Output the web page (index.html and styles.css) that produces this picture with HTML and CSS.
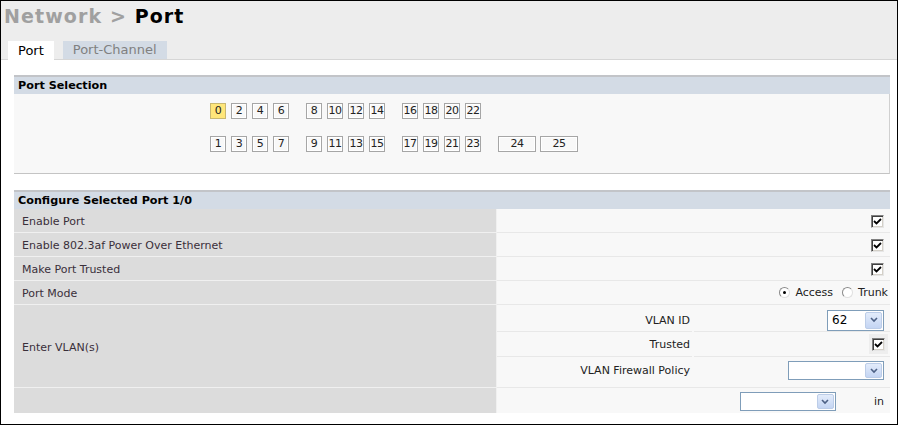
FILE: index.html
```html
<!DOCTYPE html>
<html>
<head>
  <title>Network &gt; Port</title>
  <link rel="stylesheet" href="styles.css">
</head>
<body>
  <div class="frame">
    <div class="header">
      <h1 class="title"><span class="crumb">Network &gt;</span> Port</h1>
      <div class="tabs">
        <div class="tab active">Port</div>
        <div class="tab">Port-Channel</div>
      </div>
    </div>

    <div class="section">
      <div class="section-head">Port Selection</div>
      <div class="port-box">
        <div class="port-row">
          <div class="group">
            <span class="port selected">0</span><span class="port">2</span><span class="port">4</span><span class="port">6</span>
          </div>
          <div class="group">
            <span class="port">8</span><span class="port">10</span><span class="port">12</span><span class="port">14</span>
          </div>
          <div class="group">
            <span class="port">16</span><span class="port">18</span><span class="port">20</span><span class="port">22</span>
          </div>
        </div>
        <div class="port-row">
          <div class="group">
            <span class="port">1</span><span class="port">3</span><span class="port">5</span><span class="port">7</span>
          </div>
          <div class="group">
            <span class="port">9</span><span class="port">11</span><span class="port">13</span><span class="port">15</span>
          </div>
          <div class="group">
            <span class="port">17</span><span class="port">19</span><span class="port">21</span><span class="port">23</span>
          </div>
          <div class="group wide">
            <span class="port big">24</span><span class="port big">25</span>
          </div>
        </div>
      </div>
    </div>

    <div class="section config">
      <div class="section-head">Configure Selected Port 1/0</div>
      <table class="config-table">
        <tr>
          <td class="label">Enable Port</td>
          <td class="value"><span class="check"><svg viewBox="0 0 9 9" width="9" height="9"><path d="M1 4 L3.5 6.5 L8 2" fill="none" stroke="#000" stroke-width="1.8"/></svg></span></td>
        </tr>
        <tr>
          <td class="label">Enable 802.3af Power Over Ethernet</td>
          <td class="value"><span class="check"><svg viewBox="0 0 9 9" width="9" height="9"><path d="M1 4 L3.5 6.5 L8 2" fill="none" stroke="#000" stroke-width="1.8"/></svg></span></td>
        </tr>
        <tr>
          <td class="label">Make Port Trusted</td>
          <td class="value"><span class="check"><svg viewBox="0 0 9 9" width="9" height="9"><path d="M1 4 L3.5 6.5 L8 2" fill="none" stroke="#000" stroke-width="1.8"/></svg></span></td>
        </tr>
        <tr>
          <td class="label">Port Mode</td>
          <td class="value">
            <span class="radios">
              <span class="radio on"></span><span class="radio-label">Access</span>
              <span class="radio"></span><span class="radio-label">Trunk</span>
            </span>
          </td>
        </tr>
        <tr>
          <td class="label">Enter VLAN(s)</td>
          <td class="value nested">
            <table class="vlan-table">
              <tr class="vlan-id">
                <td class="sub-label">VLAN ID</td>
                <td class="sub-value">
                  <span class="select small"><span class="select-text">62</span><span class="arrow"><svg viewBox="0 0 8 6" width="8" height="6"><path d="M1 1 L4 4 L7 1" fill="none" stroke="#4d6185" stroke-width="1.6"/></svg></span></span>
                </td>
              </tr>
              <tr class="vlan-trusted">
                <td class="sub-label">Trusted</td>
                <td class="sub-value"><span class="check-cell"><span class="check"><svg viewBox="0 0 9 9" width="9" height="9"><path d="M1 4 L3.5 6.5 L8 2" fill="none" stroke="#000" stroke-width="1.8"/></svg></span></span></td>
              </tr>
              <tr class="vlan-policy">
                <td class="sub-label">VLAN Firewall Policy</td>
                <td class="sub-value">
                  <span class="select medium"><span class="select-text"></span><span class="arrow"><svg viewBox="0 0 8 6" width="8" height="6"><path d="M1 1 L4 4 L7 1" fill="none" stroke="#4d6185" stroke-width="1.6"/></svg></span></span>
                </td>
              </tr>
            </table>
          </td>
        </tr>
        <tr class="last">
          <td class="label"></td>
          <td class="value">
            <span class="last-cell">
              <span class="select medium"><span class="select-text"></span><span class="arrow"><svg viewBox="0 0 8 6" width="8" height="6"><path d="M1 1 L4 4 L7 1" fill="none" stroke="#4d6185" stroke-width="1.6"/></svg></span></span>
              <span class="in-text">in</span>
            </span>
          </td>
        </tr>
      </table>
    </div>
  </div>
</body>
</html>
```

FILE: styles.css
```css
body {
  margin: 0;
  font-family: "DejaVu Sans", Verdana, sans-serif;
  font-size: 11px;
  color: #333;
}

.frame {
  width: 896px;
  height: 423px;
  border: 1px solid #000;
  background-color: #fff;
}

.header {
  height: 58px;
  background-color: #ededed;
  border-bottom: 1px solid #d6d6d6;
  display: flex;
  flex-direction: column;
  justify-content: space-between;
}

.title {
  margin: 0;
  padding: 4px 0 0 3px;
  font-size: 19px;
  letter-spacing: 1.1px;
  font-weight: bold;
  color: #000;
  line-height: 22px;
}

.crumb {
  color: #a0a0a0;
}

.tabs {
  display: flex;
  align-items: flex-end;
  gap: 9px;
  padding-left: 7px;
  margin-bottom: -1px;
}

.tab {
  height: 18px;
  line-height: 18px;
  padding: 0 10px;
  font-size: 13px;
  color: #808080;
  background-color: #d3dbe5;
  margin-bottom: 1px;
}

.tab.active {
  height: 19px;
  line-height: 19px;
  color: #000;
  background-color: #fff;
  margin-bottom: 0;
}

.section {
  margin: 15px 7px 0 13px;
}

.section.config {
  margin-top: 16px;
}

.section-head {
  height: 17px;
  line-height: 18px;
  padding-left: 4px;
  border-top: 2px solid #c2c4c8;
  background-color: #d3dbe5;
  font-size: 11.2px;
  font-weight: bold;
  color: #000;
}

.port-box {
  height: 70px;
  padding: 9px 0 0 196px;
  background-color: #f8f8f8;
  border-bottom: 1px solid #c4c4c4;
  border-right: 1px solid #d0d0d0;
  display: flex;
  flex-direction: column;
  gap: 17px;
}

.port-row {
  display: flex;
  gap: 17px;
}

.group {
  display: flex;
  gap: 5px;
}

.group.wide {
  gap: 4px;
}

.port {
  width: 14px;
  height: 14px;
  line-height: 14px;
  text-align: center;
  font-size: 11px;
  color: #222;
  background-color: #f8f8f8;
  border: 1px solid #a6a6a6;
  box-shadow: inset 0 0 0 1px #fff;
  letter-spacing: -0.5px;
}

.port.big {
  width: 36px;
}

.port.selected {
  background-color: #ffe67a;
  border-color: #c9b870;
  box-shadow: none;
}

.config-table {
  width: 876px;
  border-collapse: collapse;
}

.config-table td {
  padding: 2px 0 0 0;
  height: 21px;
}

.label {
  width: 474px;
  padding-left: 8px !important;
  background-color: #dcdcdc;
  border-bottom: 1px solid #f0f0f0;
  border-right: 1px solid #f0f0f0;
  color: #3a2f3a;
}

.value {
  background-color: #f8f8f8;
  border-bottom: 1px solid #e8e8e8;
  text-align: right;
  padding-right: 6px !important;
}

.config-table tr.last td {
  border-bottom: none;
  height: 21px;
  padding-top: 4px;
}

.check {
  display: inline-block;
  width: 9px;
  height: 9px;
  background-color: #fff;
  border: 1px solid;
  border-color: #808080 #e6e6e6 #e6e6e6 #808080;
  box-shadow: inset 1px 1px 0 #404040, inset -1px -1px 0 #d4d0c8;
  padding: 1px;
  vertical-align: middle;
}

.check svg {
  display: block;
}

.radios {
  display: inline-flex;
  align-items: center;
  gap: 5px;
  margin-right: -4px;
}

.radio {
  width: 9px;
  height: 9px;
  border-radius: 50%;
  border: 1px solid #8a8a8a;
  border-right-color: #e0e0e0;
  border-bottom-color: #e0e0e0;
  background-color: #fff;
  position: relative;
}

.radio.on::after {
  content: "";
  position: absolute;
  left: 3px;
  top: 3px;
  width: 3px;
  height: 3px;
  border-radius: 50%;
  background-color: #000;
}

.radio-label {
  color: #222;
  margin-right: 4px;
}

.radio-label:last-child {
  margin-right: 0;
}

.nested {
  padding: 0 !important;
  height: 82px;
}

.vlan-table {
  width: 100%;
  border-collapse: collapse;
}

.vlan-table td {
  border-bottom: 1px solid #e8e8e8;
  padding: 0;
}

.vlan-table tr:last-child td {
  border-bottom: none;
}

.vlan-table tr.vlan-id td {
  height: 22px;
  padding-top: 4px;
}

.vlan-table tr.vlan-trusted td {
  height: 24px;
}

.vlan-table tr.vlan-policy td {
  height: 27px;
  padding-bottom: 3px;
}

.sub-label {
  width: 193px;
  text-align: right;
  padding-right: 2px !important;
  color: #222;
  border-right: 2px solid #f8f8f8;
}

.sub-value {
  text-align: right;
  padding-right: 6px !important;
}

.check-cell {
  display: inline-block;
  padding: 3px;
  background-color: #eeeeee;
  margin-right: -4px;
  vertical-align: middle;
}

.select {
  display: inline-flex;
  height: 17px;
  border: 1px solid #7f9db9;
  background-color: #fff;
  vertical-align: middle;
  text-align: left;
}

.select.small {
  width: 55px;
  height: 19px;
}

.select.medium {
  width: 94px;
}

.select-text {
  flex: 1;
  padding-left: 4px;
  font-size: 12px;
  line-height: 19px;
  color: #000;
}

.arrow {
  width: 15px;
  margin: 1px;
  background: linear-gradient(#e3ecfb, #c4d5f3);
  border: 1px solid #bccde8;
  border-radius: 2px;
  display: flex;
  align-items: center;
  justify-content: center;
}

.last-cell {
  display: inline-flex;
  align-items: center;
  gap: 36px;
}

.in-text {
  color: #222;
  padding-left: 2px;
}
```
